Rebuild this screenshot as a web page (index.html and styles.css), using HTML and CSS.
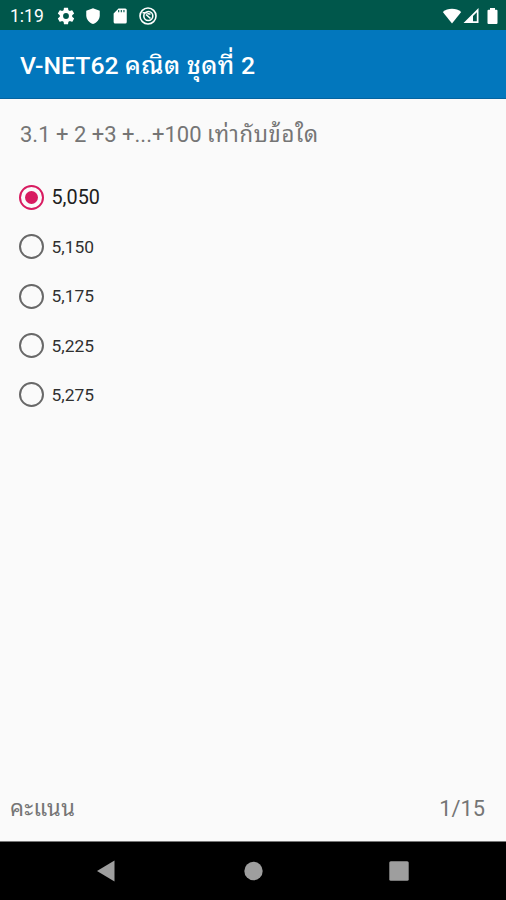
FILE: index.html
```html
<!DOCTYPE html>
<html lang="th">
<head>
<meta charset="utf-8">
<title>V-NET62 คณิต ชุดที่ 2</title>
<link rel="stylesheet" href="styles.css">
</head>
<body>
<div class="screen">
  <header class="status">
    <span class="clock">1:19</span>
    <svg class="gear" width="20" height="20" viewBox="0 0 24 24"><path fill="#fff" fill-rule="evenodd" d="M19.4 13a7.500 7.500 0 0 0 0-2l2.100-1.650a.5.5 0 0 0 .12-.64l-2-3.460a.5.5 0 0 0-.61-.22l-2.490 1a7.300 7.300 0 0 0-1.690-.98l-.38-2.650A.49.49 0 0 0 14 2h-4a.49.49 0 0 0-.49.420l-.38 2.650c-.61.25-1.170.59-1.690.98l-2.490-1a.5.5 0 0 0-.61.22l-2 3.460a.5.5 0 0 0 .12.640L4.570 11a8 8 0 0 0 0 2l-2.110 1.650a.5.5 0 0 0-.12.640l2 3.460c.12.22.39.3.61.22l2.490-1c.52.4 1.080.73 1.690.98l.38 2.650c.03.24.24.420.49.420h4c.25 0 .46-.18.49-.42l.38-2.650a7.700 7.700 0 0 0 1.690-.98l2.490 1c.23.09.49 0 .61-.22l2-3.460a.5.5 0 0 0-.12-.64zM12 15.500a3.500 3.500 0 1 1 0-7 3.500 3.500 0 0 1 0 7z"/></svg>
    <svg class="shield" width="18" height="18" viewBox="0 0 24 24"><path fill="#fff" d="M12 1.500 3 5v6c0 5.500 3.800 10.200 9 11.500 5.200-1.300 9-6 9-11.500V5z"/></svg>
    <svg class="card" width="18" height="18" viewBox="0 0 24 24"><path fill="#fff" fill-rule="evenodd" d="M19 2h-9L3.500 8.500V20c0 1.100.9 2 2 2H19a2 2 0 0 0 2-2V4a2 2 0 0 0-2-2zM9.500 4H11v3H9.500zm3.500 0h1.500v3H13zm3.500 0H18v3h-1.500z"/></svg>
    <svg class="swirl" width="20" height="20" viewBox="0 0 20 20" fill="none" stroke="#fff"><circle cx="10" cy="10" r="8" stroke-width="1.600"/><circle cx="10.300" cy="10" r="4.500" stroke-width="1.600"/><path stroke-width="1.600" d="M4.500 6.700h5M8 8.500l4.500 4M9.500 7.500l3 .8"/></svg>
    <span class="signals">
      <svg width="20" height="18" viewBox="0 0 20 18"><path fill="#fff" d="M10 16.500.8 5C5.500.7 14.500.7 19.200 5z"/></svg>
      <svg width="16" height="18" viewBox="0 0 16 18"><path fill="#fff" fill-rule="evenodd" d="M15.500 1v15H.5zM13.800 5.200 10 9v5.300h3.800z"/></svg>
      <svg class="battery" width="11" height="18" viewBox="0 0 11 18"><path fill="#fff" d="M3 1h5v1.800h1.500q1 0 1 1V16q0 1-1 1h-8q-1 0-1-1V3.800q0-1 1-1H3z"/></svg>
    </span>
  </header>
  <h1 class="appbar"><span>V-NET62</span> <span class="thai">คณิต</span> <span class="thai">ชุดที่</span> <span>2</span></h1>
  <main class="quiz">
    <p class="question">3.1 + 2 +3 +...+100 <span class="thai">เท่ากับข้อใด</span></p>
    <ul class="choices">
      <li class="choice selected"><span class="radio"></span><span>5,050</span></li>
      <li class="choice"><span class="radio"></span><span>5,150</span></li>
      <li class="choice"><span class="radio"></span><span>5,175</span></li>
      <li class="choice"><span class="radio"></span><span>5,225</span></li>
      <li class="choice"><span class="radio"></span><span>5,275</span></li>
    </ul>
  </main>
  <div class="score"><span class="score-label thai">คะแนน</span><span class="progress">1/15</span></div>
  <nav class="nav">
    <svg width="20" height="24" viewBox="0 0 20 24"><path fill="#9e9e9e" d="M1 12 18.500 1.500v21z"/></svg>
    <svg width="20" height="20" viewBox="0 0 20 20"><circle fill="#9e9e9e" cx="10.500" cy="10" r="9.200"/></svg>
    <svg width="20" height="20" viewBox="0 0 20 20"><rect fill="#9e9e9e" x=".3" y=".3" width="19.400" height="19.400" rx="1.500"/></svg>
  </nav>
</div>
</body>
</html>
```
FILE: styles.css
```css
* { box-sizing: border-box; }
body { margin: 0; font-family: Roboto, "Noto Sans", sans-serif; }
.thai { font-family: "Noto Sans Thai Looped", "Noto Looped Thai", Loma, Garuda, Waree, Umpush, "Noto Serif Thai", Norasi, serif; line-height: 1; }
.screen { width: 506px; height: 900px; display: flex; flex-direction: column; background: #fafafa; overflow: hidden; }
svg { display: block; flex: none; }
.status { height: 30px; flex: none; display: flex; align-items: center; background: #00574b; padding: 2px 8px 0 10px; color: #fff; }
.clock { width: 46px; font-size: 17.500px; line-height: 28px; }
.shield { margin-left: 8px; }
.card { margin-left: 9px; }
.swirl { margin-left: 9px; }
.signals { display: flex; margin-left: auto; gap: 1px; }
.battery { margin-left: 7px; }
.appbar { height: 69px; flex: none; margin: 0; padding: 1px 20px 0; background: #0277bd; border-bottom: 1px solid #0464a0; color: #fff; font-size: 24.800px; font-weight: 500; line-height: 70px; white-space: nowrap; }
.appbar .thai { letter-spacing: .5px; }
.quiz { flex: 1; padding: 17px 20px 0 19px; }
.question { margin: 0; padding-left: 1px; height: 38px; line-height: 38px; font-size: 22px; color: #757575; white-space: nowrap; }
.question .thai { letter-spacing: .7px; }
.choices { list-style: none; margin: 0; padding: 19px 0 0; }
.choice { height: 49.300px; display: flex; align-items: center; gap: 7.500px; font-size: 17.400px; color: #303030; }
.radio { width: 25px; height: 25px; flex: none; border: 2px solid #686868; border-radius: 50%; display: grid; place-items: center; }
.selected { font-size: 19.800px; color: #202020; }
.selected .radio { border-color: #d81b60; }
.selected .radio::before { content: ""; width: 13px; height: 13px; border-radius: 50%; background: #d81b60; }
.score { height: 66px; flex: none; display: flex; justify-content: space-between; align-items: center; padding: 0 21px 0 10px; color: #757575; font-size: 22px; line-height: 66px; }
.score-label { letter-spacing: .4px; padding-bottom: 4px; }
.progress { padding-top: 1px; font-size: 21.800px; }
.nav { height: 59px; flex: none; display: flex; align-items: center; justify-content: space-between; padding: 0 97px 0 96px; background: #000; border-top: 1px solid #777; }
```
